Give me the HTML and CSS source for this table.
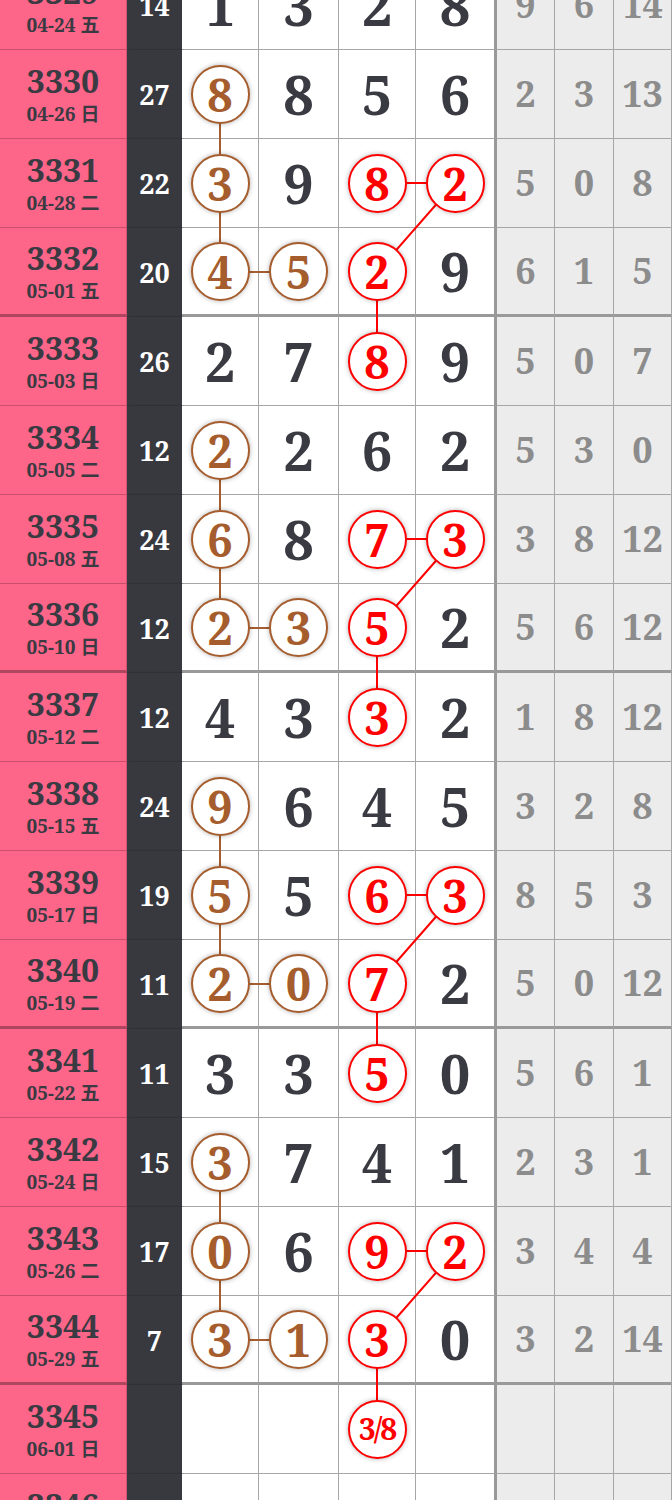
FILE: index.html
```html
<!DOCTYPE html>
<html lang="zh">
<head>
  <meta charset="UTF-8">
  <title>走势图</title>
  <link rel="stylesheet" href="styles.css">
</head>
<body>

<div class="page">
  <div class="chart" id="chart">
    <svg class="links" id="links" width="672" height="1602"></svg>
  </div>
</div>

<script>
  const chart = document.getElementById('chart');
  const links = document.getElementById('links');

  // b = brown ball, r = red ball
  const rows = [
    ['3329', '04-24 五', '14', ['1', '3', '2', '8'], ['9', '6', '14']],
    ['3330', '04-26 日', '27', ['b8', '8', '5', '6'], ['2', '3', '13']],
    ['3331', '04-28 二', '22', ['b3', '9', 'r8', 'r2'], ['5', '0', '8']],
    ['3332', '05-01 五', '20', ['b4', 'b5', 'r2', '9'], ['6', '1', '5']],
    ['3333', '05-03 日', '26', ['2', '7', 'r8', '9'], ['5', '0', '7']],
    ['3334', '05-05 二', '12', ['b2', '2', '6', '2'], ['5', '3', '0']],
    ['3335', '05-08 五', '24', ['b6', '8', 'r7', 'r3'], ['3', '8', '12']],
    ['3336', '05-10 日', '12', ['b2', 'b3', 'r5', '2'], ['5', '6', '12']],
    ['3337', '05-12 二', '12', ['4', '3', 'r3', '2'], ['1', '8', '12']],
    ['3338', '05-15 五', '24', ['b9', '6', '4', '5'], ['3', '2', '8']],
    ['3339', '05-17 日', '19', ['b5', '5', 'r6', 'r3'], ['8', '5', '3']],
    ['3340', '05-19 二', '11', ['b2', 'b0', 'r7', '2'], ['5', '0', '12']],
    ['3341', '05-22 五', '11', ['3', '3', 'r5', '0'], ['5', '6', '1']],
    ['3342', '05-24 日', '15', ['b3', '7', '4', '1'], ['2', '3', '1']],
    ['3343', '05-26 二', '17', ['b0', '6', 'r9', 'r2'], ['3', '4', '4']],
    ['3344', '05-29 五', '7', ['b3', 'b1', 'r3', '0'], ['3', '2', '14']],
    ['3345', '06-01 日', '', ['', '', 'r3/8', ''], ['', '', '']],
    ['3346', '06-03 二', '', ['', '', '', ''], ['', '', '']]
  ];

  // [color, col, row] -> [col, row]
  const segments = [
    ['#a65d2e', 0, 1, 0, 3], ['#a65d2e', 0, 3, 1, 3],
    ['#a65d2e', 0, 5, 0, 7], ['#a65d2e', 0, 7, 1, 7],
    ['#a65d2e', 0, 9, 0, 11], ['#a65d2e', 0, 11, 1, 11],
    ['#a65d2e', 0, 13, 0, 15], ['#a65d2e', 0, 15, 1, 15],
    ['#f00', 2, 2, 3, 2], ['#f00', 3, 2, 2, 3], ['#f00', 2, 3, 2, 4],
    ['#f00', 2, 6, 3, 6], ['#f00', 3, 6, 2, 7], ['#f00', 2, 7, 2, 8],
    ['#f00', 2, 10, 3, 10], ['#f00', 3, 10, 2, 11], ['#f00', 2, 11, 2, 12],
    ['#f00', 2, 14, 3, 14], ['#f00', 3, 14, 2, 15], ['#f00', 2, 15, 2, 16]
  ];
  const colX = [220, 298.5, 377, 455];
  const rowY = i => i * 89 + 44;

  function cell(cls, html) {
    const div = document.createElement('div');
    div.className = cls;
    div.innerHTML = html;
    return div;
  }

  function numCell(val, last) {
    let html = val;
    if (val[0] === 'b' || val[0] === 'r') {
      const text = val.slice(1);
      const size = text.length > 1 ? ' small' : '';
      html = `<span class="ball ${val[0] === 'b' ? 'brown' : 'red'}${size}">${text}</span>`;
    }
    return cell('num' + (last ? ' last' : ''), html);
  }

  rows.forEach((r, i) => {
    const row = document.createElement('div');
    row.className = 'row' + (i % 4 === 3 ? ' sep' : '');
    row.appendChild(cell('issue', `<span class="no">${r[0]}</span><span class="date">${r[1]}</span>`));
    row.appendChild(cell('sum', r[2]));
    r[3].forEach((v, k) => row.appendChild(numCell(v, k === 3)));
    r[4].forEach(v => row.appendChild(cell('miss', v)));
    chart.appendChild(row);
  });

  segments.forEach(s => {
    const line = document.createElementNS('http://www.w3.org/2000/svg', 'line');
    line.setAttribute('x1', colX[s[1]]);
    line.setAttribute('y1', rowY(s[2]));
    line.setAttribute('x2', colX[s[3]]);
    line.setAttribute('y2', rowY(s[4]));
    line.setAttribute('stroke', s[0]);
    line.setAttribute('stroke-width', 2);
    links.appendChild(line);
  });
</script>

</body>
</html>
```

FILE: styles.css
```css
body {
  margin: 0;
  background: #fff;
  font-family: "Noto Serif", "DejaVu Serif", serif;
}

.page {
  height: 1500px;
  overflow: hidden;
}

.chart {
  position: relative;
  margin-top: -39px;
  font-weight: bold;
  color: #3a3a42;
}

.links {
  position: absolute;
  top: 0;
  left: 0;
}

.row {
  display: grid;
  grid-template-columns: 127px 55px 77px 80px 77px 81px 58px 59px 58px;
  height: 89px;
}

.row > div {
  box-sizing: border-box;
  display: flex;
  align-items: center;
  justify-content: center;
  border-right: 1px solid #a6a6a6;
  border-bottom: 1px solid #a6a6a6;
  line-height: 1;
}

.row.sep > div {
  border-bottom: 3px solid #999;
}

.row > .issue {
  flex-direction: column;
  gap: 8px;
  background: #fd6589;
  border-right: 1px solid rgba(0,0,0,0.15);
  border-bottom-color: rgba(0,0,0,0.2);
}

.row.sep > .issue {
  border-bottom-color: rgba(0,0,0,0.3);
}

.issue .no {
  font-size: 32px;
}

.issue .date {
  font-size: 19px;
  font-family: "Noto Serif", "DejaVu Serif", "Noto Sans CJK SC", serif;
}

.row > .sum {
  background: #38383f;
  color: #fff;
  font-size: 27px;
  border: none;
  box-shadow: 1px 0 2px rgba(0,0,0,0.4);
}

.row.sep > .sum {
  border: none;
}

.num {
  background: #fff;
  font-size: 54px;
}

.row > .num.last {
  border-right: 3px solid #999;
}

.miss {
  background: #ececec;
  color: #8c8c8c;
  font-size: 36px;
}

.ball {
  position: relative;
  z-index: 1;
  box-sizing: border-box;
  width: 59px;
  height: 59px;
  border: 2.5px solid;
  border-radius: 50%;
  background: #fff;
  display: flex;
  align-items: center;
  justify-content: center;
  font-size: 45px;
  box-shadow: 0 0 5px rgba(0,0,0,0.3);
}

.ball.brown {
  color: #a65d2e;
  border-color: #a65d2e;
}

.ball.red {
  color: #f00;
  border-color: #f00;
}

.ball.small {
  font-size: 30px;
  letter-spacing: -2px;
}
```
